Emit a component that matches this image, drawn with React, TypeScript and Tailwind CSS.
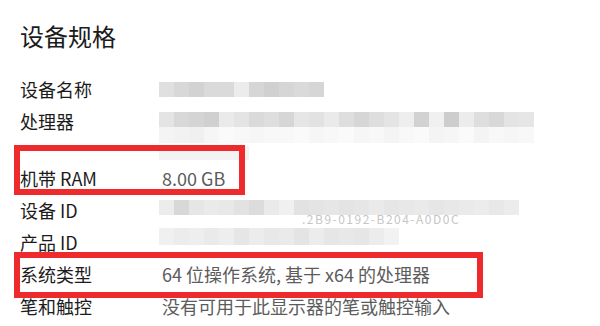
import React from 'react';

// blurred (pixelated) value placeholders
const Mosaic = ({ shades, cell = 15, h = 15 }: { shades: string[]; cell?: number; h?: number }) => (
  <div className="flex">
    {shades.map((c, i) => (
      <div key={i} style={{ width: cell, height: h, backgroundColor: c }} />
    ))}
  </div>
);

const nameShades = ['#e0e0e0', '#d8d8d8', '#d2d2d2', '#dadada', '#dadada', '#ececec', '#d6d6d6', '#d0d0d0', '#d6d6d6', '#dadada', '#d6d6d6'];
const cpuTop = ['#e4e4e4', '#d8d8d8', '#d4d4d4', '#d0d0d0', '#eaeaea', '#e4e4e4', '#dadada', '#dedede', '#d6d6d6', '#e6e6e6', '#e2e2e2', '#eaeaea', '#dedede', '#d6d6d6', '#dedede', '#e4e4e4', '#eeeeee', '#d2d2d2', '#f0f0f0', '#cdcdcd', '#ececec', '#dedede', '#d8d8d8', '#e4e4e4', '#e6e6e6'];
const cpuBottom = ['#f4f4f4', '#f2f2f2', '#f0f0f0', '#f6f6f6', '#fafafa', '#f8f8f8', '#f6f6f6', '#f8f8f8', '#f8f8f8', '#fafafa', '#f6f6f6', '#f8f8f8', '#fafafa', '#f6f6f6', '#f8f8f8', '#f4f4f4', '#f8f8f8', '#fafafa', '#f4f4f4', '#f6f6f6', '#fafafa', '#f4f4f4', '#f8f8f8', '#f6f6f6', '#f8f8f8'];
const idShades = ['#ececec', '#d8d8d8', '#e6e6e6', '#eaeaea', '#e8e8e8', '#e2e2e2', '#dcdcdc', '#eaeaea', '#f0f0f0', '#e2e2e2', '#e4e4e4', '#e6e6e6', '#e4e4e4', '#e6e6e6', '#eaeaea', '#e6e6e6', '#e8e8e8', '#eaeaea', '#e6e6e6', '#e8e8e8', '#eaeaea', '#ececec', '#e8e8e8', '#ececec'];
const productShades = ['#f0f0f0', '#ececec', '#eeeeee', '#eaeaea', '#eeeeee', '#e6e6e6', '#ececec', '#e8e8e8', '#eaeaea', '#e4e4e4', '#ececec', '#e6e6e6', '#e8e8e8', '#e6e6e6', '#ececec', '#f2f2f2'];

const Row = ({ label, children, h = 'h-8' }: { label: string; children?: React.ReactNode; h?: string }) => (
  <div className={`flex ${h}`}>
    <div className="w-[142px] shrink-0 leading-8 text-[18px] text-[#1b1b1b]">{label}</div>
    <div className="flex-1 leading-8 text-[18px] text-[#5c5c5c]">{children}</div>
  </div>
);

export default function App() {
  return (
    <div className="relative w-[600px] h-[326px] overflow-hidden bg-white font-['Noto_Sans_CJK_SC','Noto_Sans',sans-serif]">
      <div className="pl-5 pt-[19px]">
        <h1 className="text-[24px] leading-[34px] text-[#1b1b1b]">设备规格</h1>
        <div className="mt-[20px]">
          <Row label="设备名称">
            <div className="pt-[9px] -ml-[3px]">
              <Mosaic shades={nameShades} />
            </div>
          </Row>
          <Row label="处理器" h="h-[57px]">
            <div className="pt-[7px] -ml-[3px]">
              <Mosaic shades={cpuTop} />
              <Mosaic shades={cpuBottom} h={16} />
              <div className="w-[90px] h-[14px] bg-[#f3f3f3] mt-[3px]" />
            </div>
          </Row>
          <Row label="机带 RAM">8.00 GB</Row>
          <Row label="设备 ID">
            <div className="pt-[6px] -ml-[3px]">
              <Mosaic shades={idShades} />
              <div className="pl-[143px] -mt-[2px] text-[12px] leading-[12px] text-[#c6c6c6] tracking-[1.5px]">.2B9-0192-B204-A0D0C</div>
            </div>
          </Row>
          <Row label="产品 ID">
            <div className="pt-[2px] -ml-[3px]">
              <Mosaic shades={productShades} h={17} />
            </div>
          </Row>
          <Row label="系统类型">64 位操作系统, 基于 x64 的处理器</Row>
          <Row label="笔和触控">没有可用于此显示器的笔或触控输入</Row>
        </div>
      </div>

      {/* annotation boxes */}
      <div className="absolute left-[14px] top-[145px] w-[231px] h-[50px] border-[6px] border-[#ef2a2c]" />
      <div className="absolute left-[14px] top-[252px] w-[469px] h-[46px] border-[6px] border-[#ef2a2c]" />
    </div>
  );
}
